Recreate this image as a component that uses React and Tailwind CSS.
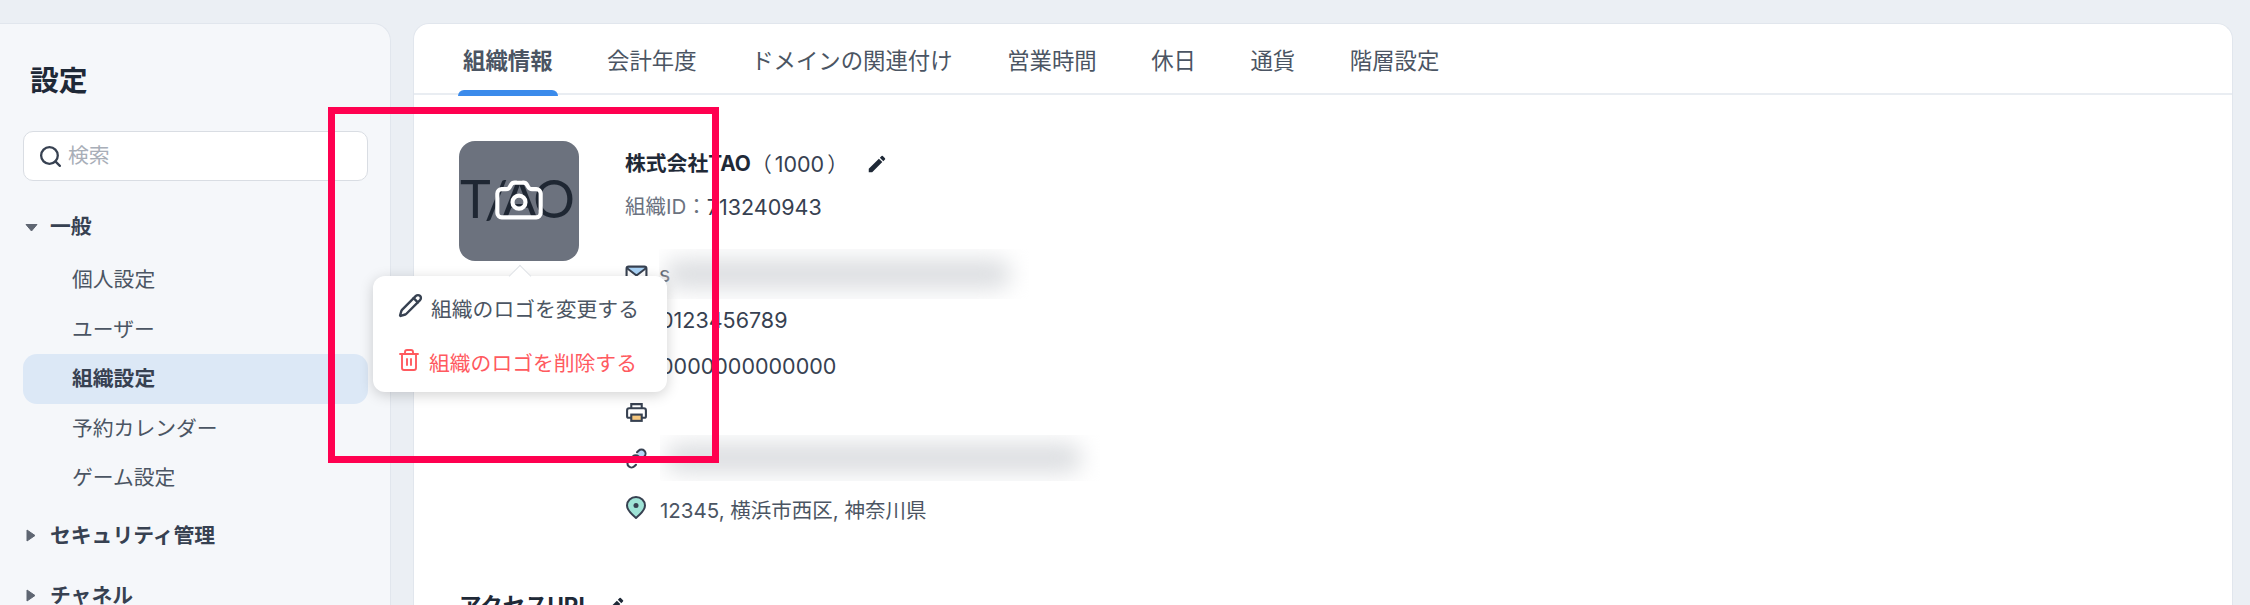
import { Camera, Pencil, Search, Trash2 } from "lucide-react";

const tabs = ["組織情報", "会計年度", "ドメインの関連付け", "営業時間", "休日", "通貨", "階層設定"];
const items = ["個人設定", "ユーザー", "組織設定", "予約カレンダー", "ゲーム設定"];
const font = { fontFamily: 'Inter, "Noto Sans CJK JP", sans-serif' };

function Caret({ open }) {
  return (
    <svg width="13" height="13" viewBox="0 0 13 13" className="shrink-0 text-[#5f6672]">
      {open
        ? <path d="M1 3.5h11L6.5 10z" fill="currentColor" stroke="currentColor" strokeLinejoin="round" />
        : <path d="M2 1v11l8-5.5z" fill="currentColor" stroke="currentColor" strokeLinejoin="round" />}
    </svg>
  );
}

function MailIcon() {
  return (
    <svg width="23" height="23" viewBox="0 0 22 22" fill="none">
      <path d="M2 4h18l-9 8z" fill="#a9d3f7" />
      <rect x="1.5" y="3.5" width="19" height="15" rx="2" stroke="#374151" strokeWidth="2" />
      <path d="M2 5l9 7 9-7" stroke="#374151" strokeWidth="2" />
    </svg>
  );
}

function PhoneIcon() {
  return (
    <svg width="22" height="22" viewBox="0 0 22 22" fill="none">
      <path d="M5 2h3l2 5-2 2c1 2 3 4 5 5l2-2 5 2v3c0 2-1 3-3 3C9 20 2 12 2 5c0-2 1-3 3-3z" stroke="#374151" strokeWidth="2" />
    </svg>
  );
}

function FaxIcon() {
  return (
    <svg width="23" height="23" viewBox="0 0 22 22" fill="none">
      <rect x="6" y="13" width="10" height="6" fill="#f5c77e" />
      <path d="M6 7V3h10v4M6 16H3.500A1.500 1.500 0 0 1 2 14.500V9a2 2 0 0 1 2-2h14a2 2 0 0 1 2 2v5.500a1.500 1.500 0 0 1-1.500 1.500H16" stroke="#374151" strokeWidth="2" />
      <rect x="6" y="13" width="10" height="6" stroke="#374151" strokeWidth="2" />
    </svg>
  );
}

function LinkIcon() {
  return (
    <svg width="23" height="23" viewBox="0 0 22 22" fill="none">
      <path d="M12 5l2-2c1.500-1 3.500-1 5 0 1.500 1.500 1.500 3.500 0 5l-3 3c-1 1-3 1-4 0z" fill="#b5d6f5" />
      <path d="M9 13c1.500 1.500 4 1.500 5.500 0l4-4c1.500-1.500 1.500-4 0-5.500s-4-1.500-5.500 0l-1.500 1.500" stroke="#374151" strokeWidth="2" strokeLinecap="round" />
      <path d="M13 9c-1.500-1.500-4-1.500-5.500 0l-4 4c-1.500 1.500-1.500 4 0 5.500s4 1.500 5.500 0l1.500-1.500" stroke="#374151" strokeWidth="2" strokeLinecap="round" />
    </svg>
  );
}

function PinIcon() {
  return (
    <svg width="22" height="24" viewBox="0 0 22 24" fill="none" className="mb-[7px]">
      <path d="M11 22c-4-3.500-9-7.500-9-12.500a9 8.500 0 0 1 18 0C20 14.500 15 18.500 11 22z" fill="#9fe3d6" stroke="#374151" strokeWidth="2" strokeLinejoin="round" />
      <circle cx="11" cy="9.500" r="2.500" fill="#374151" />
    </svg>
  );
}

function EditIcon() {
  return (
    <svg width="22" height="22" viewBox="0 0 24 24" fill="#1f2937" className="shrink-0">
      <path d="M3 17.250V21h3.750L17.800 9.940l-3.750-3.750L3 17.250zM20.700 7.040a1 1 0 0 0 0-1.410l-2.340-2.340a1 1 0 0 0-1.410 0l-1.830 1.830 3.750 3.750 1.830-1.830z" />
    </svg>
  );
}

function Blurred({ className, children }) {
  return (
    <div className={`relative shrink-0 overflow-hidden ${className}`}>
      {children}
      <div className="absolute left-[5px] right-[18px] top-1/2 h-[30px] -translate-y-1/2 rounded-full bg-[#dcdee1] blur-[11px]" />
    </div>
  );
}

function InfoRow({ icon, children }) {
  return (
    <div className="flex h-[46px] items-center text-[21.5px] text-[#374151]">
      <span className="flex w-[35px] shrink-0">{icon}</span>
      {children}
    </div>
  );
}

export default function App() {
  return (
    <div className="relative flex h-[605px] w-[2250px] overflow-hidden bg-[#ebeff4] pt-[23px] pr-[17px]" style={font}>
      <aside className="w-[391px] shrink-0 rounded-tr-[18px] border-r border-t border-[#e1e6ed] bg-[#f5f7fa] pl-[23px] pr-[22px]">
        <h1 className="mt-[37px] ml-[7px] text-[28.8px] leading-[40px] font-bold text-[#1f2937]">設定</h1>
        <div className="mt-[30px] flex h-[50px] items-center gap-[5px] rounded-[10px] border border-[#d9dde3] bg-white pl-[14px] text-[20.8px] text-[#a8aeb8]">
          <Search size={25} strokeWidth={2.2} className="text-[#374151]" />
          <span>検索</span>
        </div>
        <div className="mt-[26px] flex h-[40px] items-center gap-[12px] pl-[2px] text-[20.8px] font-bold text-[#374151]">
          <Caret open />
          <span>一般</span>
        </div>
        <div className="mt-[8px] flex flex-col">
          {items.map(item => (
            <div
              key={item}
              className={`flex h-[49.500px] items-center rounded-[14px] pl-[49px] text-[20.8px] text-[#4b5563] ${item === "組織設定" ? "bg-[#dce8f6] font-bold text-[#374151]" : ""}`}
            >
              {item}
            </div>
          ))}
        </div>
        <div className="mt-[13px] flex h-[40px] items-center gap-[12px] pl-[2px] text-[20.8px] font-bold text-[#374151]">
          <Caret />
          <span>セキュリティ管理</span>
        </div>
        <div className="mt-[20px] flex h-[40px] items-center gap-[12px] pl-[2px] text-[20.8px] font-bold text-[#374151]">
          <Caret />
          <span>チャネル</span>
        </div>
      </aside>

      <main className="ml-[22px] flex-1 rounded-t-[16px] border-x border-t border-[#e1e6ed] bg-white">
        <nav className="flex h-[71px] gap-[54.500px] border-b-2 border-[#e9edf2] pl-[49px]">
          {tabs.map((tab, i) => (
            <div key={tab} className={`relative flex h-[71px] items-center pt-[3px] text-[22.4px] text-[#4b5563] ${i === 0 ? "font-bold text-[#1f2937]" : ""}`}>
              {tab}
              {i === 0 && <span className="absolute -inset-x-[5px] bottom-[-1px] h-[6px] rounded-t-[6px] bg-[#3b8beb]" />}
            </div>
          ))}
        </nav>

        <div className="flex gap-[46px] pl-[45px] pt-[46px]">
          <div className="relative flex h-[120px] w-[120px] shrink-0 items-center justify-center overflow-hidden rounded-[16px] bg-[#6c727e]">
            <span className="absolute left-[1px] top-[29px] whitespace-nowrap text-[52px] leading-[56px] font-normal tracking-[-3px] text-[#1f2733]" style={{ fontFamily: "Lato, sans-serif" }}>T/AO</span>
            <Camera size={52} strokeWidth={1.9} className="relative mb-[2px] text-white" />
          </div>

          <div className="flex-1">
            <div className="mt-[3px] flex h-[40px] items-center text-[20.8px] text-[#374151]">
              <span className="font-bold text-[#1f2937]">株式会社TAO</span>
              <span>（<span className="px-[3px] text-[21.5px]">1000</span>）</span>
              <span className="ml-[18px]"><EditIcon /></span>
            </div>
            <div className="mt-[3px] flex h-[40px] items-center text-[20.5px] text-[#6b7280]">
              <span>組織ID：</span>
              <span className="text-[21.5px] text-[#374151]">713240943</span>
            </div>

            <div className="mt-[24px] flex flex-col">
              <InfoRow icon={<MailIcon />}>
                <Blurred className="flex h-[50px] w-[370px] items-center -ml-[1px]">
                  <span>s</span>
                </Blurred>
              </InfoRow>
              <InfoRow icon={<PhoneIcon />}>0123456789</InfoRow>
              <InfoRow icon={<span />}>0000000000000</InfoRow>
              <InfoRow icon={<FaxIcon />} />
              <InfoRow icon={<LinkIcon />}>
                <Blurred className="h-[46px] w-[440px]" />
              </InfoRow>
              <div className="mt-[7px]">
                <InfoRow icon={<PinIcon />}>
                  <span className="text-[20.5px] text-[#4b5563]">12345, 横浜市西区, 神奈川県</span>
                </InfoRow>
              </div>
            </div>
          </div>
        </div>

        <div className="mt-[55px] ml-[45px] flex items-center gap-[13px] text-[22.4px] font-bold text-[#1f2937]">
          <span>アクセスURL</span>
          <EditIcon />
        </div>
      </main>

      {/* logo menu over the page */}
      <div className="absolute left-[373px] top-[276px] h-[116px] w-[294px] rounded-[12px] bg-white text-[20.8px] shadow-[0_3px_14px_rgba(0,0,0,0.18)]">
        <span className="absolute left-[139px] top-[-8px] h-[16px] w-[16px] rotate-45 border-l border-t border-[#dfe2e6] bg-white" />
        <div className="relative flex h-[58px] items-center gap-[8px] pl-[25px] pt-[10px] text-[#4b5563]">
          <Pencil size={25} strokeWidth={2.3} className="mb-[10px] text-[#374151]" />
          <span>組織のロゴを変更する</span>
        </div>
        <div className="relative mt-[5px] flex h-[50px] items-center gap-[8px] pl-[25px] text-[#ff5a5f]">
          <Trash2 size={24} strokeWidth={1.9} className="-ml-[1px] mb-[8px]" />
          <span>組織のロゴを削除する</span>
        </div>
      </div>

      {/* annotation frame */}
      <div className="pointer-events-none absolute left-[328px] top-[107px] h-[356px] w-[391px] border-[7px] border-[#ff0050]" />
    </div>
  );
}
